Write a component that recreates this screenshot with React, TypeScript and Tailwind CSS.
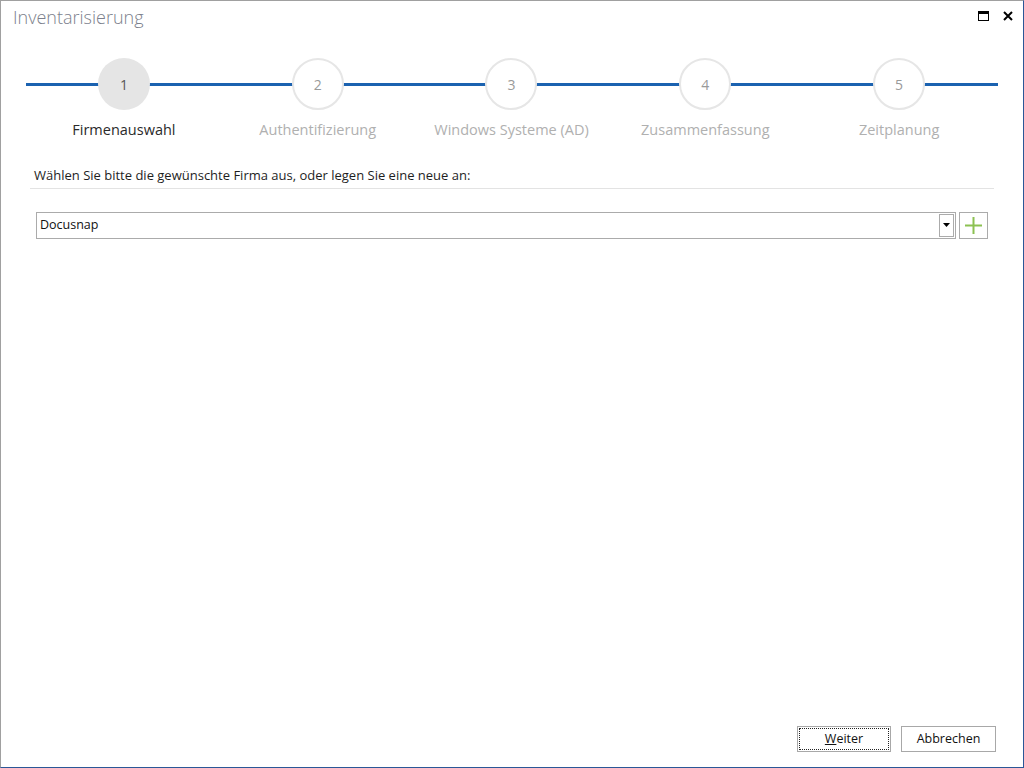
import React from "react";

const steps = [
  { n: 1, label: "Firmenauswahl", active: true },
  { n: 2, label: "Authentifizierung" },
  { n: 3, label: "Windows Systeme (AD)" },
  { n: 4, label: "Zusammenfassung" },
  { n: 5, label: "Zeitplanung" },
];

export default function App() {
  return (
    <div
      className="w-[1024px] h-[768px] bg-white border-l border-t border-l-[#a0a0a0] border-t-[#a0a0a0] border-r border-b border-r-[#2b5797] border-b-[#2b5797] flex flex-col overflow-hidden"
      style={{ fontFamily: '"Open Sans", "Noto Sans", sans-serif' }}
    >
      {/* Title bar */}
      <div className="h-[34px] shrink-0 flex items-center pl-[12px] pr-[10px]">
        <div className="text-[18px] font-light text-[#7c7f8c] leading-none mt-[-2px]">Inventarisierung</div>
        <div className="ml-auto flex items-center gap-[14px] mt-[-4px]">
          <svg width="11" height="10" viewBox="0 0 11 10">
            <rect x="0.5" y="0.5" width="10" height="9" fill="none" stroke="#000" strokeWidth="1" />
            <rect x="0" y="0" width="11" height="3" fill="#000" />
          </svg>
          <svg width="10" height="10" viewBox="0 0 10 10">
            <path d="M1 1 L9 9 M9 1 L1 9" stroke="#000" strokeWidth="2" />
          </svg>
        </div>
      </div>

      {/* Stepper */}
      <div className="relative shrink-0 mt-[23px] mx-[25px] h-[90px]">
        <div className="absolute left-0 right-0 top-[25px] h-[3px] bg-[#1b62b0]" />
        <div className="relative flex pl-[1px]">
          {steps.map((s) => (
            <div key={s.n} className="w-[193.8px] flex flex-col items-center">
              <div
                className={
                  s.active
                    ? "w-[52px] h-[52px] rounded-full bg-[#e5e5e5] flex items-center justify-center text-[14px] text-[#555]"
                    : "w-[52px] h-[52px] rounded-full bg-white border-2 border-[#e6e6e6] flex items-center justify-center text-[14px] text-[#9a9a9a]"
                }
              >
                {s.n}
              </div>
              <div
                className={
                  s.active
                    ? "mt-[9px] text-[14.5px] text-[#2a2a2a]"
                    : "mt-[9px] text-[14.5px] text-[#b0b0b0]"
                }
              >
                {s.label}
              </div>
            </div>
          ))}
        </div>
      </div>

      {/* Instruction */}
      <div className="shrink-0 mt-[18px] mx-[29px] pl-[4px] text-[13px] text-[#1e1e1e] pb-[2px] border-b border-[#e3e3e3]">
        Wählen Sie bitte die gewünschte Firma aus, oder legen Sie eine neue an:
      </div>

      {/* Combo */}
      <div className="shrink-0 mt-[23px] ml-[35px] mr-[35px] flex gap-[3px]">
        <div className="flex-1 h-[27px] border border-[#ababab] flex items-center pl-[3px] pr-[1px]">
          <span className="text-[12.5px] text-[#111]">Docusnap</span>
          <div className="ml-auto w-[15px] h-[23px] border border-[#ababab] flex items-center justify-center">
            <svg width="7" height="4" viewBox="0 0 7 4">
              <path d="M0 0 H7 L3.5 4 Z" fill="#000" />
            </svg>
          </div>
        </div>
        <div className="w-[29px] h-[27px] border border-[#ababab] flex items-center justify-center">
          <svg width="17" height="17" viewBox="0 0 17 17">
            <path d="M8.5 0 V17 M0 8.5 H17" stroke="#8cc152" strokeWidth="2" />
          </svg>
        </div>
      </div>

      <div className="flex-1" />

      {/* Buttons */}
      <div className="flex justify-end gap-[10px] pr-[27px] pb-[15px]">
        <button className="w-[94px] h-[26px] border border-[#a8a8a8] bg-white p-[1px]">
          <div className="w-full h-full border border-dotted border-[#222] flex items-center justify-center text-[12.5px] text-[#111]">
            <span><span className="underline">W</span>eiter</span>
          </div>
        </button>
        <button className="w-[95px] h-[26px] border border-[#a8a8a8] bg-white flex items-center justify-center text-[12.5px] text-[#111]">
          Abbrechen
        </button>
      </div>
    </div>
  );
}
